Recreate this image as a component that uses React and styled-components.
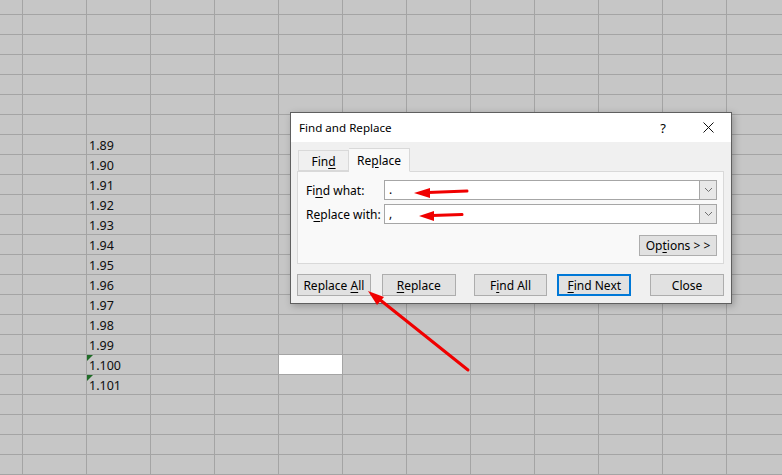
import React from 'react'
import styled, { createGlobalStyle } from 'styled-components'

const GlobalStyle = createGlobalStyle`
    html, body {
        margin: 0;
        padding: 0;
        background: #c6c6c6;
        overflow: hidden;
    }
    * { box-sizing: border-box; }
`

const Page = styled.div`
    position: relative;
    width: 782px;
    height: 475px;
    overflow: hidden;
    font-family: "Noto Sans", "Open Sans", sans-serif;
`

// Hoja de calculo
const Sheet = styled.div`
    display: grid;
    grid-template-columns: 23px repeat(12, 64px);
    grid-template-rows: 15px repeat(23, 20px);
    background: #c6c6c6;
`

const Cell = styled.div`
    position: relative;
    border-right: 1px solid #a4a4a4;
    border-bottom: 1px solid #a4a4a4;
    background: ${p => (p.$blank ? '#ffffff' : 'transparent')};
    display: flex;
    align-items: flex-end;
    padding: 0 0 2px 2px;
    font-size: 12.5px;
    color: #0e0e0e;
    line-height: 1;
    white-space: nowrap;

    ${p => p.$flag && `
        &::before {
            content: '';
            position: absolute;
            top: 0;
            left: 0;
            border-top: 6px solid #1f6b27;
            border-right: 6px solid transparent;
        }
    `}
`

// Dialogo
const Dialog = styled.div`
    position: absolute;
    left: 290px;
    top: 112px;
    width: 442px;
    height: 192px;
    border: 1px solid #5f5f5f;
    background: #f0f0f0;
    box-shadow: 2px 2px 7px rgba(0, 0, 0, 0.25);
    display: flex;
    flex-direction: column;
    font-size: 12px;
    color: #000;
`

const TitleBar = styled.div`
    height: 29px;
    background: #fff;
    display: flex;
    align-items: center;
    padding-left: 8px;
`

const Title = styled.span`
    flex: 1;
    font-size: 11.6px;
`

const TitleButton = styled.div`
    width: 46px;
    height: 29px;
    display: flex;
    align-items: center;
    justify-content: center;
    font-size: 13px;
    padding-left: ${p => p.$pl || 0}px;
`

const Body = styled.div`
    flex: 1;
    display: flex;
    flex-direction: column;
    padding: 5px 7px 0 6px;
`

const Tabs = styled.div`
    display: flex;
    align-items: flex-end;
    height: 24px;
    padding-left: 1px;
    position: relative;
    z-index: 1;
`

const Tab = styled.div`
    height: ${p => (p.$active ? '24px' : '21px')};
    width: ${p => p.$w}px;
    display: flex;
    align-items: center;
    justify-content: center;
    border: 1px solid #d9d9d9;
    border-bottom: ${p => (p.$active ? '1px solid #f9f9f9' : '1px solid #d9d9d9')};
    border-left: ${p => (p.$active ? 'none' : '1px solid #d9d9d9')};
    background: ${p => (p.$active ? '#f9f9f9' : '#f0f0f0')};
    margin-bottom: ${p => (p.$active ? '-1px' : '0')};
    padding-top: ${p => (p.$active ? '0' : '1px')};
`

const Panel = styled.div`
    height: 93px;
    border: 1px solid #d9d9d9;
    background: #f9f9f9;
    display: flex;
    flex-direction: column;
    padding: 8px 6px 0 8px;
`

const FieldRow = styled.div`
    display: flex;
    align-items: center;
    height: 20px;
    margin-top: ${p => p.$mt || 0}px;
`

const Label = styled.span`
    width: 78px;
`

const Combo = styled.div`
    flex: 1;
    height: 20px;
    border: 1px solid #a6a6a6;
    background: #fff;
    display: flex;
    align-items: center;
`

const ComboText = styled.span`
    flex: 1;
    padding-left: 4px;
    font-size: 12px;
    line-height: 1;
`

const ComboArrow = styled.div`
    width: 17px;
    height: 100%;
    background: #e8e8e8;
    border-left: 1px solid #a6a6a6;
    display: flex;
    align-items: center;
    justify-content: center;
`

const Button = styled.div`
    width: ${p => p.$w || 74}px;
    height: ${p => p.$h || 22}px;
    margin-left: ${p => p.$ml || 0}px;
    border: ${p => (p.$default ? '2px solid #0078d7' : '1px solid #adadad')};
    background: #e1e1e1;
    display: flex;
    align-items: center;
    justify-content: center;
    white-space: pre;
`

const OptionsRow = styled.div`
    display: flex;
    justify-content: flex-end;
    margin-top: 11px;
`

const ButtonRow = styled.div`
    display: flex;
    margin-top: 10px;
`

const Key = styled.span`
    text-decoration: underline;
    text-underline-offset: 2px;
`

const Overlay = styled.svg`
    position: absolute;
    left: 0;
    top: 0;
    pointer-events: none;
    z-index: 5;
`

const values = ['1.89', '1.90', '1.91', '1.92', '1.93', '1.94', '1.95', '1.96', '1.97', '1.98', '1.99', '1.100', '1.101']

const Chevron = () => (
    <svg width="9" height="6" viewBox="0 0 9 6">
        <path d="M1 1 L4.5 4.5 L8 1" fill="none" stroke="#707070" strokeWidth="1" />
    </svg>
)

const App = () => {
    const rows = []
    for (let r = 0; r < 24; r++) {
        for (let c = 0; c < 13; c++) {
            const idx = r - 7
            const text = c === 2 && idx >= 0 && idx < values.length ? values[idx] : ''
            rows.push(
                <Cell key={`${r}-${c}`} $blank={r === 18 && c === 5} $flag={c === 2 && (r === 18 || r === 19)}>
                    {text}
                </Cell>
            )
        }
    }

    return (
        <Page>
            <GlobalStyle />

            <Sheet>{rows}</Sheet>

            <Dialog>
                <TitleBar>
                    <Title>Find and Replace</Title>
                    <TitleButton $pl={2}>?</TitleButton>
                    <TitleButton>
                        <svg width="11" height="11" viewBox="0 0 11 11">
                            <path d="M0.5 0.5 L10.5 10.5 M10.5 0.5 L0.5 10.5" stroke="#111" strokeWidth="1" />
                        </svg>
                    </TitleButton>
                </TitleBar>

                <Body>
                    <Tabs>
                        <Tab $w={51}>Fin<Key>d</Key></Tab>
                        <Tab $w={61} $active>Re<Key>p</Key>lace</Tab>
                    </Tabs>

                    <Panel>
                        <FieldRow>
                            <Label>Fi<Key>n</Key>d what:</Label>
                            <Combo>
                                <ComboText>.</ComboText>
                                <ComboArrow><Chevron /></ComboArrow>
                            </Combo>
                        </FieldRow>
                        <FieldRow $mt={4}>
                            <Label>R<Key>e</Key>place with:</Label>
                            <Combo>
                                <ComboText>,</ComboText>
                                <ComboArrow><Chevron /></ComboArrow>
                            </Combo>
                        </FieldRow>
                        <OptionsRow>
                            <Button $w={78} $h={21}><span>Op<Key>t</Key>ions &gt; &gt;</span></Button>
                        </OptionsRow>
                    </Panel>

                    <ButtonRow>
                        <Button><span>Replace <Key>A</Key>ll</span></Button>
                        <Button $ml={11}><span><Key>R</Key>eplace</span></Button>
                        <Button $ml={18}><span>F<Key>i</Key>nd All</span></Button>
                        <Button $ml={10} $default><span><Key>F</Key>ind Next</span></Button>
                        <Button $ml={19}><span>Close</span></Button>
                    </ButtonRow>
                </Body>
            </Dialog>

            <Overlay width="782" height="475" viewBox="0 0 782 475">
                <line x1="468" y1="370" x2="379" y2="299" stroke="#f00000" strokeWidth="3" strokeLinecap="round" />
                <polygon points="368,291 384,297 377,305" fill="#f00000" />

                <line x1="467" y1="191" x2="428" y2="192.5" stroke="#f00000" strokeWidth="3" strokeLinecap="round" />
                <polygon points="414,193 430,188 430,198" fill="#f00000" />

                <line x1="462" y1="214.5" x2="432" y2="215.5" stroke="#f00000" strokeWidth="3" strokeLinecap="round" />
                <polygon points="419,216 434,211 434,221" fill="#f00000" />
            </Overlay>
        </Page>
    )
}

export default App
